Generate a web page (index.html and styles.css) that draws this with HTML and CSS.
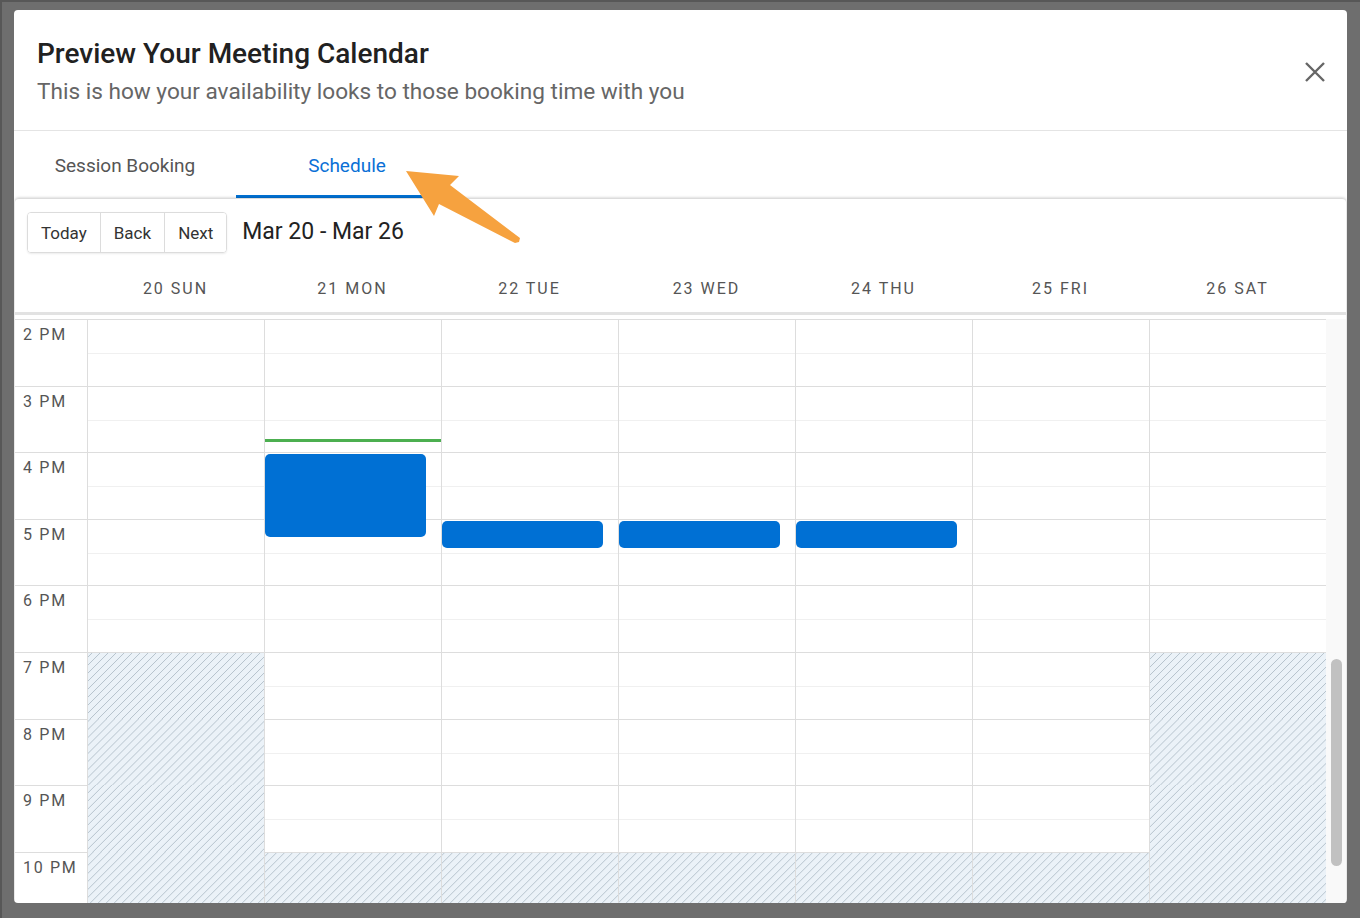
FILE: index.html
```html
<!DOCTYPE html>
<html lang="en">
<head>
    <meta charset="UTF-8">
    <meta name="viewport" content="width=device-width, initial-scale=1.0">
    <title>Preview Your Meeting Calendar</title>
    <link rel="stylesheet" href="styles.css">
</head>
<body>
    <div class="modal">
        <header class="modal-header">
            <div>
                <h1 class="modal-title">Preview Your Meeting Calendar</h1>
                <p class="modal-subtitle">This is how your availability looks to those booking time with you</p>
            </div>
            <button class="close-btn" aria-label="Close">
                <svg width="22" height="22" viewBox="0 0 22 22"><path d="M2 2 L20 20 M20 2 L2 20" stroke="#666" stroke-width="2.4" fill="none"/></svg>
            </button>
        </header>

        <nav class="tabs">
            <div class="tab">Session Booking</div>
            <div class="tab active">Schedule</div>
        </nav>

        <section class="calendar">
            <div class="toolbar">
                <div class="btn-group">
                    <button class="btn">Today</button>
                    <button class="btn">Back</button>
                    <button class="btn">Next</button>
                </div>
                <span class="range-label">Mar 20 - Mar 26</span>
            </div>

            <div class="day-header">
                <div class="gutter-head"></div>
                <div class="day-name">20 SUN</div>
                <div class="day-name">21 MON</div>
                <div class="day-name">22 TUE</div>
                <div class="day-name">23 WED</div>
                <div class="day-name">24 THU</div>
                <div class="day-name">25 FRI</div>
                <div class="day-name">26 SAT</div>
                <div class="scroll-head"></div>
            </div>

            <div class="grid">
                <div class="gutter">
                    <div class="time">2 PM</div>
                    <div class="time">3 PM</div>
                    <div class="time">4 PM</div>
                    <div class="time">5 PM</div>
                    <div class="time">6 PM</div>
                    <div class="time">7 PM</div>
                    <div class="time">8 PM</div>
                    <div class="time">9 PM</div>
                    <div class="time">10 PM</div>
                </div>

                <!-- Sunday -->
                <div class="day">
                    <div class="slot"></div><div class="slot"></div><div class="slot"></div><div class="slot"></div><div class="slot"></div>
                    <div class="slot off"></div><div class="slot off"></div><div class="slot off"></div><div class="slot off"></div>
                </div>

                <!-- Monday -->
                <div class="day">
                    <div class="slot"></div><div class="slot"></div><div class="slot"></div><div class="slot"></div><div class="slot"></div>
                    <div class="slot"></div><div class="slot"></div><div class="slot"></div><div class="slot off"></div>
                    <div class="now-line"></div>
                    <div class="event event-long"></div>
                </div>

                <!-- Tuesday -->
                <div class="day">
                    <div class="slot"></div><div class="slot"></div><div class="slot"></div><div class="slot"></div><div class="slot"></div>
                    <div class="slot"></div><div class="slot"></div><div class="slot"></div><div class="slot off"></div>
                    <div class="event event-short"></div>
                </div>

                <!-- Wednesday -->
                <div class="day">
                    <div class="slot"></div><div class="slot"></div><div class="slot"></div><div class="slot"></div><div class="slot"></div>
                    <div class="slot"></div><div class="slot"></div><div class="slot"></div><div class="slot off"></div>
                    <div class="event event-short"></div>
                </div>

                <!-- Thursday -->
                <div class="day">
                    <div class="slot"></div><div class="slot"></div><div class="slot"></div><div class="slot"></div><div class="slot"></div>
                    <div class="slot"></div><div class="slot"></div><div class="slot"></div><div class="slot off"></div>
                    <div class="event event-short"></div>
                </div>

                <!-- Friday -->
                <div class="day">
                    <div class="slot"></div><div class="slot"></div><div class="slot"></div><div class="slot"></div><div class="slot"></div>
                    <div class="slot"></div><div class="slot"></div><div class="slot"></div><div class="slot off"></div>
                </div>

                <!-- Saturday -->
                <div class="day">
                    <div class="slot"></div><div class="slot"></div><div class="slot"></div><div class="slot"></div><div class="slot"></div>
                    <div class="slot off"></div><div class="slot off"></div><div class="slot off"></div><div class="slot off"></div>
                </div>

                <div class="scrollbar">
                    <div class="thumb"></div>
                </div>
            </div>
        </section>
    </div>

    <!-- стрелка-подсказка -->
    <svg class="pointer" width="125" height="80" viewBox="400 165 125 80">
        <polygon points="404,169 457,174 448,183 518,236 517,240 513,241 437,202 432,214" fill="#f6a23f"/>
    </svg>
</body>
</html>
```

FILE: styles.css
```css
html {
    background-color: #6e6e6e;
}

body {
    margin: 0;
    padding: 8px 13px 0 12px;
    height: 918px;
    box-sizing: border-box;
    border-top: 2px solid #575757;
    border-left: 2px solid #575757;
    font-family: Roboto, "Liberation Sans", sans-serif;
    color: #222;
    position: relative;
    overflow: hidden;
}

.modal {
    width: 1333px;
    height: 893px;
    background-color: #fff;
    border-radius: 4px;
    display: flex;
    flex-direction: column;
    overflow: hidden;
}

.modal-header {
    display: flex;
    align-items: center;
    justify-content: space-between;
    padding: 28px 20px 24px 23px;
    border-bottom: 1px solid #e4e4e4;
}

.modal-title {
    margin: 0;
    font-size: 28px;
    line-height: 32px;
    font-weight: 500;
    color: #212121;
}

.modal-subtitle {
    margin: 8px 0 0;
    font-size: 22.6px;
    line-height: 28px;
    color: #666;
}

.close-btn {
    background: none;
    border: none;
    padding: 0;
    width: 24px;
    height: 24px;
    display: flex;
    align-items: center;
    justify-content: center;
    cursor: pointer;
}

.tabs {
    display: flex;
    height: 67px;
}

.tab {
    width: 222px;
    display: flex;
    align-items: center;
    justify-content: center;
    font-size: 19px;
    color: #555;
    box-sizing: border-box;
    padding-top: 4px;
    border-bottom: 3px solid transparent;
}

.tab.active {
    color: #0a70d6;
    border-bottom-color: #0070d2;
}

.calendar {
    flex: 1;
    margin: 0 1px;
    border-top: 1px solid #dcdcdc;
    border-radius: 4px 4px 0 0;
    box-shadow: 0 0 3px rgba(0, 0, 0, 0.25);
    display: flex;
    flex-direction: column;
    min-height: 0;
}

.toolbar {
    display: flex;
    align-items: center;
    gap: 15px;
    padding: 13px 12px 0;
}

.btn-group {
    display: flex;
    border: 1px solid #dcdcdc;
    border-radius: 4px;
    box-shadow: 0 1px 2px rgba(0, 0, 0, 0.08);
    overflow: hidden;
}

.btn {
    height: 39px;
    padding: 0 13px;
    background-color: #fff;
    border: none;
    border-left: 1px solid #dcdcdc;
    font-family: inherit;
    font-size: 17px;
    color: #333;
    cursor: pointer;
}

.btn:first-child {
    border-left: none;
}

.range-label {
    font-size: 23px;
    color: #222;
    margin-top: -2px;
}

.day-header {
    display: flex;
    padding: 27px 0 14px;
    border-bottom: 3px solid #e2e2e2;
    margin-bottom: 4px;
}

.gutter-head {
    width: 72px;
}

.day-name {
    width: 177px;
    text-align: center;
    font-size: 16px;
    line-height: 18px;
    letter-spacing: 2px;
    color: #555;
}

.scroll-head {
    width: 20px;
}

.grid {
    flex: 1;
    display: flex;
    overflow: hidden;
    min-height: 0;
}

.gutter {
    width: 72px;
    flex-shrink: 0;
}

.time {
    height: 66.6px;
    box-sizing: border-box;
    border-top: 1px solid #ddd;
    padding: 6px 0 0 8px;
    font-size: 16px;
    line-height: 18px;
    letter-spacing: 1.7px;
    color: #555;
}

.day {
    width: 177px;
    flex-shrink: 0;
    box-sizing: border-box;
    border-left: 1px solid #ddd;
    position: relative;
}

.slot {
    height: 66.6px;
    box-sizing: border-box;
    border-top: 1px solid #ddd;
    position: relative;
}

.slot::after {
    content: '';
    position: absolute;
    left: 0;
    right: 0;
    top: 33px;
    border-top: 1px solid #f0f0f0;
}

.slot.off {
    background-color: #ebf2f8;
    background-image: linear-gradient(135deg, #b6c3cd 0, #b6c3cd 10%, transparent 10%, transparent 50%, #b6c3cd 50%, #b6c3cd 60%, transparent 60%, transparent 100%);
    background-size: 8px 8px;
    background-attachment: fixed;
}

.slot.off::after {
    display: none;
}

.off + .off {
    border-top-color: transparent;
}

.now-line {
    position: absolute;
    left: 0;
    right: 0;
    top: 120px;
    height: 3px;
    background-color: #4caf50;
}

.event {
    position: absolute;
    left: 0;
    width: 161px;
    background-color: #0070d4;
    border-radius: 5px;
}

.event-long {
    top: 135px;
    height: 83px;
}

.event-short {
    top: 202px;
    height: 27px;
}

.scrollbar {
    width: 20px;
    flex-shrink: 0;
    background-color: #f9f9f9;
    padding: 340px 0 0 5px;
    box-sizing: border-box;
}

.thumb {
    width: 11px;
    height: 207px;
    border-radius: 6px;
    background-color: #c1c1c1;
}

.pointer {
    position: absolute;
    left: 400px;
    top: 165px;
}
```
